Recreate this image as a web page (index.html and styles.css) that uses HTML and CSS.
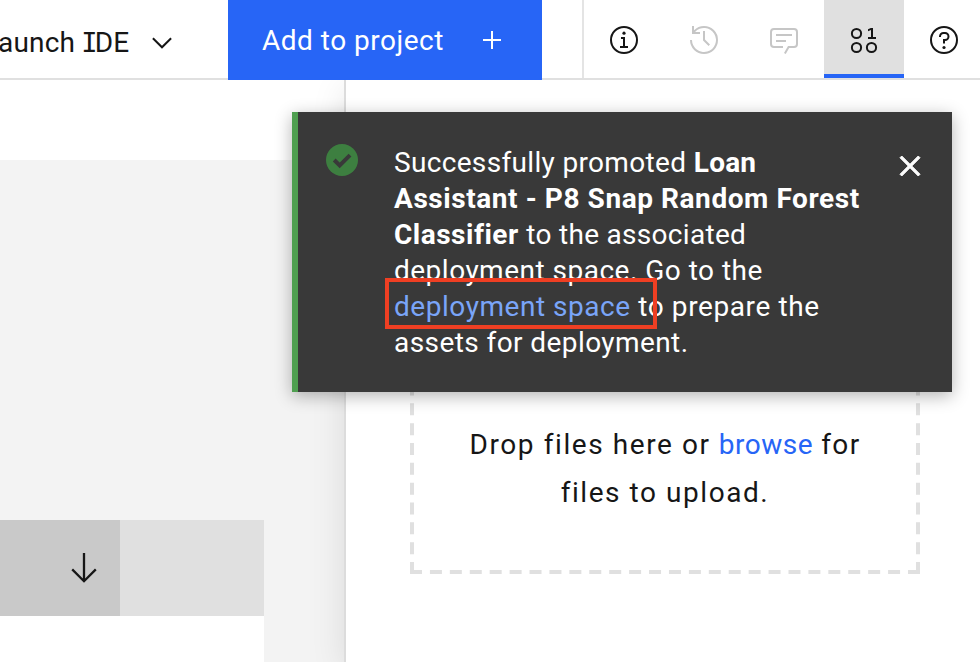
FILE: index.html
```html
<!DOCTYPE html>
<html lang="en">
<head>
<meta charset="utf-8">
<title>Project</title>
<link rel="stylesheet" href="styles.css">
</head>
<body>
<header class="toolbar">
  <div class="launch"><span class="launch-label">aunch <span class="slab">I</span>DE</span>
    <svg class="chevron" width="20" height="12" viewBox="0 0 20 12"><path d="M.9 1.2 10 10.3 19.1 1.2" fill="none" stroke="currentColor" stroke-width="2"/></svg>
  </div>
  <button class="add"><span class="add-label">Add to project</span>
    <svg width="18" height="18" viewBox="0 0 18 18"><path d="M8 0h2v8h8v2h-8v8H8v-8H0V8h8z" fill="currentColor"/></svg>
  </button>
  <nav class="tools">
    <span class="tool"><svg viewBox="0 0 32 32"><circle cx="16" cy="16" r="13" class="line"/><path d="M17 22v-9h-4v2h2v7h-3v2h8v-2z"/><circle cx="16" cy="9.2" r="1.6"/></svg></span>
    <span class="tool muted"><svg viewBox="0 0 32 32"><path d="M20.59 22 15 16.41V7h2v8.58L22 20.59z"/><path d="M16 2A13.94 13.94 0 0 0 6 6.23V2H4v8h8V8H7.08A12 12 0 1 1 4 16H2A14 14 0 1 0 16 2Z"/></svg></span>
    <span class="tool muted"><svg viewBox="0 0 32 32"><path d="M17.74 30 16 29l4-7h6a2 2 0 0 0 2-2V8a2 2 0 0 0-2-2H6a2 2 0 0 0-2 2v12a2 2 0 0 0 2 2h9v2H6a4 4 0 0 1-4-4V8a4 4 0 0 1 4-4h20a4 4 0 0 1 4 4v12a4 4 0 0 1-4 4h-4.84Z"/><path d="M8 10h16v2H8zM8 16h10v2H8z"/></svg></span>
    <span class="tool active"><svg viewBox="0 0 32 32"><g class="line"><circle cx="8.5" cy="9.5" r="4.6"/><circle cx="8.5" cy="23.5" r="4.6"/><circle cx="23.5" cy="23.5" r="4.6"/></g><path d="M25 13V4h-2.2L20 5.2v2l3-1.1V13h-3v2h8v-2z"/></svg></span>
    <span class="tool"><svg viewBox="0 0 32 32"><circle cx="16" cy="16" r="13" class="line"/><circle cx="16" cy="23.5" r="1.6"/><path d="M17 8h-1.5A4.49 4.49 0 0 0 11 12.5v.5h2v-.5a2.5 2.5 0 0 1 2.5-2.5H17a2.5 2.5 0 0 1 0 5h-2v4.5h2V17a4.5 4.5 0 0 0 0-9Z"/></svg></span>
  </nav>
</header>
<main class="content">
  <section class="workspace">
    <div class="canvas">
      <div class="table">
        <div class="table-head">
          <div class="sorted"><svg width="26" height="32" viewBox="0 0 26 32"><path d="M13 1v28M1.2 17.4 13 29.2 24.8 17.4" fill="none" stroke="currentColor" stroke-width="2.3"/></svg></div>
        </div>
      </div>
    </div>
  </section>
  <aside class="panel">
    <div class="drop">
      <svg class="dashes" width="510" height="191" viewBox="0 0 510 191"><g fill="none" stroke="#e0e0e0" stroke-width="4"><path d="M0 189H510" stroke-dasharray="12 7.92"/><path d="M2 191V0M508 191V0" stroke-dasharray="12 7.83"/></g></svg>
      <p class="drop-text"><span class="d1">Drop files here or</span> <a class="d2">browse</a> <span class="d3">for</span><br><span class="d4">files to upload.</span></p>
    </div>
  </aside>
</main>
<div class="toast">
  <svg class="check" width="32" height="32" viewBox="0 0 32 32"><circle cx="16" cy="16" r="16" fill="#3d7f40"/><path d="M8.2 16 13.7 21.4 24 11.1" fill="none" stroke="#393939" stroke-width="4"/></svg>
  <p class="message"><span class="m1">Successfully promoted</span> <b class="m2">Loan</b><br><b class="m3">Assistant - P8 Snap Random Forest</b><br><b class="m4">Classifier</b> <span class="m5">to the associated</span><br><span class="m6">deployment space. Go to the</span><br><a class="m7">deployment space</a> <span class="m8">to prepare the</span><br><span class="m9">assets for deployment.</span></p>
  <svg class="close" width="40" height="40" viewBox="0 0 32 32"><path d="M24 9.4 22.6 8 16 14.6 9.4 8 8 9.4l6.6 6.6L8 22.6 9.4 24l6.6-6.6 6.6 6.6 1.4-1.4-6.6-6.6z" fill="#fff" stroke="#fff" stroke-width=".8"/></svg>
  <div class="highlight"></div>
</div>
</body>
</html>
```
FILE: styles.css
```css
* { box-sizing: border-box; }
body {
  margin: 0;
  width: 980px;
  height: 662px;
  overflow: hidden;
  position: relative;
  display: flex;
  flex-direction: column;
  background: #fff;
  color: #161616;
  font: 28px/36px Roboto, "Liberation Sans", sans-serif;
}
svg { display: block; flex: none; }
.toolbar {
  height: 80px;
  flex: none;
  display: flex;
  box-shadow: inset 0 -2px #e0e0e0;
}
.launch {
  width: 228px;
  height: 80px;
  flex: none;
  display: flex;
  align-items: center;
  padding-top: 6px;
}
.launch-label { width: 152px; margin-left: -2px; white-space: nowrap; letter-spacing: 0.2px; }
.slab { font-family: "DejaVu Sans Mono", monospace; font-size: 27px; line-height: 1; letter-spacing: -3px; margin-left: -1px; }
.chevron { margin-left: 2px; margin-top: -1px; }
.add {
  width: 314px;
  height: 80px;
  flex: none;
  display: flex;
  align-items: center;
  padding: 0 0 0 34px;
  border: 0;
  background: #2765f6;
  color: #fff;
  font: inherit;
  white-space: nowrap;
}
.add-label { width: 221px; padding-top: 2px; text-align: left; letter-spacing: 0.5px; }
.tools {
  display: flex;
  flex: none;
  margin-left: 40px;
  border-left: 2px solid #e4e4e4;
  height: 78px;
}
.tool {
  width: 80px;
  height: 78px;
  padding: 24px;
  flex: none;
  fill: #161616;
  stroke: none;
}
.tool:last-child { width: 76px; padding-right: 20px; }
.tool svg { width: 32px; height: 32px; }
.line { fill: none; stroke: #161616; stroke-width: 2; }
.muted { fill: #c6c6c6; }
.active { background: #e0e0e0; box-shadow: inset 0 -4px #2765f6; }
.content { flex: 1; display: flex; min-height: 0; }
.workspace { width: 344px; flex: none; padding-top: 80px; display: flex; }
.canvas { flex: 1; background: #f3f3f3; padding-top: 360px; display: flex; }
.table { width: 264px; background: #fff; }
.table-head { height: 96px; background: #e0e0e0; }
.sorted {
  width: 120px;
  height: 96px;
  background: #c9c9c9;
  display: flex;
  align-items: center;
  padding-left: 71px;
}
.panel {
  flex: 1;
  background: #fff;
  border-left: 2px solid #dcdcdc;
  box-shadow: 0 8px 32px rgba(0, 0, 0, 0.1);
  padding: 303px 60px 0 64px;
  clip-path: inset(0 0 0 -60px);
}
.drop { position: relative; height: 191px; padding-top: 38px; }
.dashes { position: absolute; left: 0; top: 0; }
.drop-text { margin: 0; text-align: center; line-height: 48px; white-space: nowrap; letter-spacing: 1.3px; }
.drop-text a { color: #2765f6; }
.d1 { letter-spacing: 1.58px; }
.d2 { letter-spacing: 0.5px; }
.d4 { letter-spacing: 1.55px; }
.toast {
  position: absolute;
  left: 292px;
  top: 112px;
  width: 660px;
  height: 280px;
  display: flex;
  padding: 32px 22px 0 28px;
  background: #393939;
  border-left: 6px solid #4f9f50;
  box-shadow: 0 4px 16px rgba(0, 0, 0, 0.3);
  color: #fff;
}
.message { margin: 1px 0 0 36px; flex: 1; white-space: nowrap; letter-spacing: 0.6px; }
.message b { font-weight: 700; }
.message a { color: #7aa5f8; }
.m1 { letter-spacing: 0.33px; }
.message .m2 { letter-spacing: 0.2px; }
.m3 { letter-spacing: 0.57px; }
.m4 { letter-spacing: 0.5px; }
.m5 { letter-spacing: 0.3px; }
.m6 { letter-spacing: 0.49px; }
.m7 { letter-spacing: 0.54px; }
.m9 { letter-spacing: 0.42px; }
.close { margin-top: 2px; }
.highlight {
  position: absolute;
  left: 87px;
  top: 166px;
  width: 272px;
  height: 51px;
  border: 4px solid #ef3f23;
}
```
